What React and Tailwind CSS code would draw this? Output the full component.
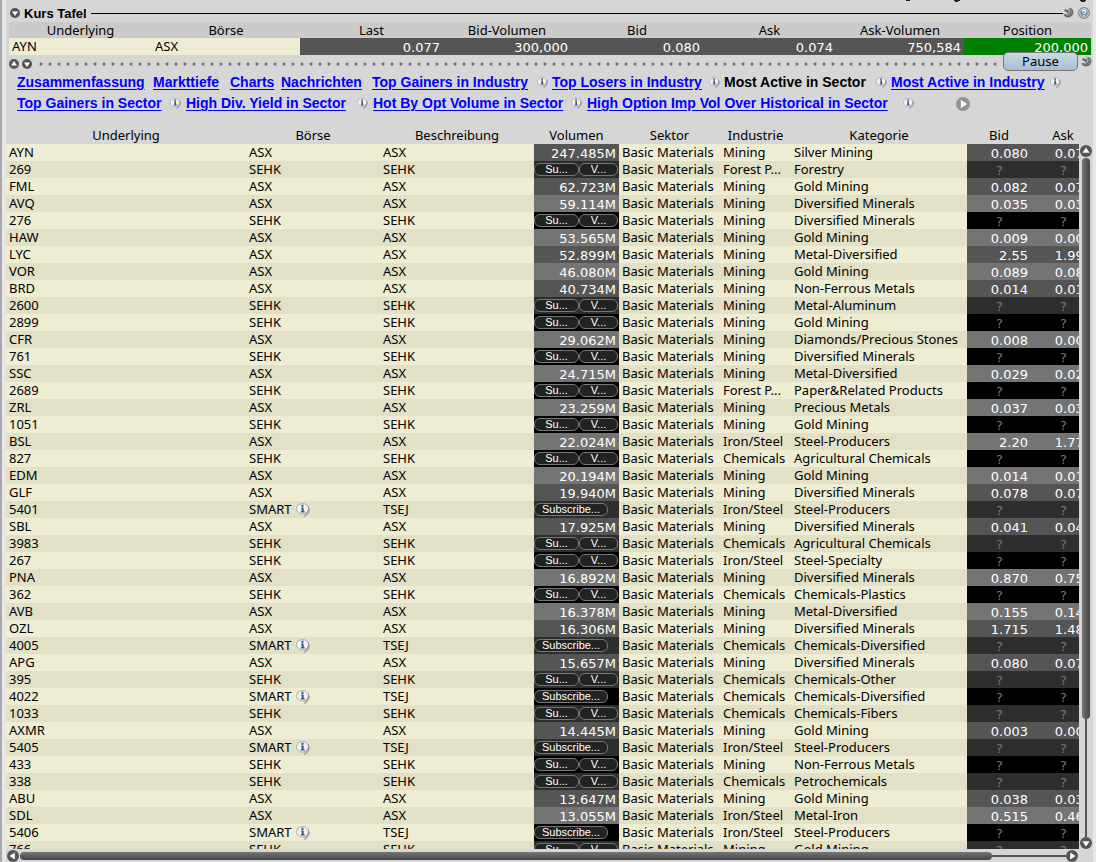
import React from "react";

const M = "Mining", C = "Chemicals", I = "Iron/Steel", F = "Forest P...";

// symbol, exchange, volume, industry, category, bid, ask
const rows = [
  ["AYN", "ASX", "247.485M", M, "Silver Mining", "0.080", "0.074"],
  ["269", "SEHK", null, F, "Forestry"],
  ["FML", "ASX", "62.723M", M, "Gold Mining", "0.082", "0.079"],
  ["AVQ", "ASX", "59.114M", M, "Diversified Minerals", "0.035", "0.034"],
  ["276", "SEHK", null, M, "Diversified Minerals"],
  ["HAW", "ASX", "53.565M", M, "Gold Mining", "0.009", "0.008"],
  ["LYC", "ASX", "52.899M", M, "Metal-Diversified", "2.55", "1.995"],
  ["VOR", "ASX", "46.080M", M, "Gold Mining", "0.089", "0.088"],
  ["BRD", "ASX", "40.734M", M, "Non-Ferrous Metals", "0.014", "0.013"],
  ["2600", "SEHK", null, M, "Metal-Aluminum"],
  ["2899", "SEHK", null, M, "Gold Mining"],
  ["CFR", "ASX", "29.062M", M, "Diamonds/Precious Stones", "0.008", "0.007"],
  ["761", "SEHK", null, M, "Diversified Minerals"],
  ["SSC", "ASX", "24.715M", M, "Metal-Diversified", "0.029", "0.028"],
  ["2689", "SEHK", null, F, "Paper&Related Products"],
  ["ZRL", "ASX", "23.259M", M, "Precious Metals", "0.037", "0.036"],
  ["1051", "SEHK", null, M, "Gold Mining"],
  ["BSL", "ASX", "22.024M", I, "Steel-Producers", "2.20", "1.770"],
  ["827", "SEHK", null, C, "Agricultural Chemicals"],
  ["EDM", "ASX", "20.194M", M, "Gold Mining", "0.014", "0.013"],
  ["GLF", "ASX", "19.940M", M, "Diversified Minerals", "0.078", "0.077"],
  ["5401", "SMART", null, I, "Steel-Producers"],
  ["SBL", "ASX", "17.925M", M, "Diversified Minerals", "0.041", "0.040"],
  ["3983", "SEHK", null, C, "Agricultural Chemicals"],
  ["267", "SEHK", null, I, "Steel-Specialty"],
  ["PNA", "ASX", "16.892M", M, "Diversified Minerals", "0.870", "0.750"],
  ["362", "SEHK", null, C, "Chemicals-Plastics"],
  ["AVB", "ASX", "16.378M", M, "Metal-Diversified", "0.155", "0.140"],
  ["OZL", "ASX", "16.306M", M, "Diversified Minerals", "1.715", "1.480"],
  ["4005", "SMART", null, C, "Chemicals-Diversified"],
  ["APG", "ASX", "15.657M", M, "Diversified Minerals", "0.080", "0.079"],
  ["395", "SEHK", null, C, "Chemicals-Other"],
  ["4022", "SMART", null, C, "Chemicals-Diversified"],
  ["1033", "SEHK", null, C, "Chemicals-Fibers"],
  ["AXMR", "ASX", "14.445M", M, "Gold Mining", "0.003", "0.002"],
  ["5405", "SMART", null, I, "Steel-Producers"],
  ["433", "SEHK", null, M, "Non-Ferrous Metals"],
  ["338", "SEHK", null, C, "Petrochemicals"],
  ["ABU", "ASX", "13.647M", M, "Gold Mining", "0.038", "0.037"],
  ["SDL", "ASX", "13.055M", I, "Metal-Iron", "0.515", "0.460"],
  ["5406", "SMART", null, I, "Steel-Producers"],
  ["766", "SEHK", null, M, "Gold Mining"],
];

const linkRows = [
  {
    cols: "grid-cols-[136px_77px_51px_91px_180px_172px_167px_174px]",
    links: [
      ["Zusammenfassung"], ["Markttiefe"], ["Charts"], ["Nachrichten"],
      ["Top Gainers in Industry", true], ["Top Losers in Industry", true],
      ["Most Active in Sector", true, true], ["Most Active in Industry", true],
    ],
  },
  {
    cols: "grid-cols-[169px_187px_214px_332px_51px]",
    links: [
      ["Top Gainers in Sector", true], ["High Div. Yield in Sector", true],
      ["Hot By Opt Volume in Sector", true],
      ["High Option Imp Vol Over Historical in Sector", true],
    ],
  },
];

const turns = { up: "", down: "rotate-180", left: "-rotate-90", right: "rotate-90" };

function ArrowButton({ dir, label, size = "size-[10px]", fill = "#555" }) {
  return (
    <button type="button" aria-label={label} className="block shrink-0">
      <svg viewBox="0 0 12 12" className={`block ${size} ${turns[dir]}`} aria-hidden="true">
        <circle cx="6" cy="6" r="6" fill={fill} />
        <path d="M6 2.500 9.600 7.800H2.400Z" fill="#fff" />
      </svg>
    </button>
  );
}

function Info({ size }) {
  return (
    <svg viewBox="0 0 14 14" className={`block shrink-0 ${size}`} aria-hidden="true">
      <path d="M9 10.500c.4 1 .2 2-.8 3 2.600-.4 4.800-3.500 5.200-7.500" fill="#c4c4c8" stroke="#8d8d90" strokeWidth=".7" />
      <ellipse cx="6.500" cy="5.800" rx="6" ry="5.300" fill="#eef0f6" stroke="#a4a6ac" strokeWidth=".9" />
      <path d="M12.200 3.500c1 2.500.5 5-2.400 6.800" fill="none" stroke="#85858a" strokeWidth="1" />
      <path d="M5.200 4.600h2.400v3.700h1v1.200H4.800V8.300h.9V5.800h-.5ZM5.500 1.800h2v2h-2Z" fill="#34506f" />
    </svg>
  );
}

function Wrench() {
  return (
    <svg viewBox="0 0 12 12" className="block size-[11px]" aria-hidden="true">
      <path d="M6 .8c3.500-.6 5.500 2 5.400 5C11.200 9.500 8 11.800 4.800 11.300 2.500 11 1 9.500.6 7.600l2.600.4 2-1.400L1 3.800 2.600 2.200l3.600 1.900Z" fill="#5e636b" />
      <path d="M6.800 1.200 7.600 5 4 9.300" stroke="#a9afb8" strokeWidth="1.400" fill="none" />
      <path d="M9.600 3.200c.6 2.600-.4 5-3 6.200" stroke="#8f959e" strokeWidth="1" fill="none" />
    </svg>
  );
}

function Help() {
  return (
    <svg viewBox="0 0 12 12" className="block size-[12px]" aria-hidden="true">
      <circle cx="6" cy="6" r="5.500" fill="#6f8297" stroke="#8c8c8c" />
      <circle cx="6" cy="6" r="4.400" fill="#8497ab" stroke="#d5dfe9" strokeWidth=".8" />
      <path d="M4.300 4.800c0-2.200 3.400-2.200 3.400-.2C7.700 5.800 6 5.800 6 7.100" fill="none" stroke="#fff" strokeWidth="1.200" />
      <circle cx="6" cy="8.700" r=".75" fill="#fff" />
    </svg>
  );
}

const pill =
  "h-[13px] rounded-[6px] border border-[#777] bg-[#222] text-center font-['Liberation_Sans',sans-serif] text-[11px] leading-[11px] text-white";

function Subscribe({ wide }) {
  if (wide) return <button type="button" className={`${pill} block w-[74px]`}>Subscribe...</button>;
  return (
    <div className="flex">
      <button type="button" className={`${pill} w-[45px]`}>Su...</button>
      <button type="button" className={`${pill} w-[39px]`}>V...</button>
    </div>
  );
}

const num = "p-0 text-right font-['DejaVu_Sans',sans-serif] text-white";
const numText = "pt-[2px] leading-[15px]";

function Quote({ value, bg }) {
  return (
    <td className={`${num} ${bg}`}>
      <div className={`${numText} ${value ? "pr-[3px]" : "pr-[28px] text-[#777]"}`}>{value || "?"}</div>
    </td>
  );
}

function Row({ row, odd }) {
  const [symbol, exchange, volume, industry, category, bid, ask] = row;
  const smart = exchange === "SMART";
  const bg = volume ? (odd ? "bg-[#747474]" : "bg-[#555]") : odd ? "bg-[#2e2e2e]" : "bg-black";
  return (
    <tr className={`h-[17px] ${odd ? "bg-[#e2e0c6]" : "bg-[#eeecd2]"}`}>
      <td className="p-0 pl-[3px]">{symbol}</td>
      <td className="p-0 pl-[3px]">
        <div className="flex items-center gap-[4px]">{exchange}{smart && <Info size="size-[14px]" />}</div>
      </td>
      <td className="p-0 pl-[3px]">{smart ? "TSEJ" : exchange}</td>
      <td className={`${num} ${bg}`}>
        {volume ? <div className={`${numText} pr-[3px]`}>{volume}</div> : <Subscribe wide={smart} />}
      </td>
      <td className="p-0 pl-[3px]">Basic Materials</td>
      <td className="p-0 pl-[3px]">{industry}</td>
      <td className="p-0 pl-[3px]">{category}</td>
      <Quote value={bid} bg={bg} />
      <Quote value={ask} bg={bg} />
    </tr>
  );
}

export default function App() {
  return (
    <div className="relative flex h-screen flex-col overflow-hidden border-r-[3px] border-l-2 border-r-[#e8e8e8] border-l-[#a9a9ad] bg-[#d6d6d6] font-['Noto_Sans',sans-serif] text-[13px] leading-[17px] text-black">
      <svg className="absolute top-0 right-[3px] h-[2px] w-[190px]" viewBox="0 0 190 2" aria-hidden="true">
        <path d="M6 0h4v1H6ZM54 0h6v1h-6ZM180 0h6v1h-6ZM55 1h3v1h-3ZM181 1h4v1h-4Z" fill="#222" />
      </svg>
      <div className="flex min-h-0 flex-1 flex-col border-l-4 border-[#e6e6e6]">
        <header className="flex h-[22px] shrink-0 items-end gap-[4px] pr-[3px] pl-1">
          <ArrowButton dir="down" label="Kurs Tafel" size="mb-1 size-[10px]" />
          <h1 className="font-['Liberation_Sans',sans-serif] text-[13px] leading-[17px] font-bold">Kurs Tafel</h1>
          <div className="mb-2 h-px flex-1 bg-black" />
          <button type="button" aria-label="Einstellungen" className="mb-1 -ml-1"><Wrench /></button>
          <button type="button" aria-label="Hilfe" className="mb-[3px]"><Help /></button>
        </header>

        <table className="mr-[2px] ml-[3px] shrink-0 table-fixed border-collapse">
          <colgroup>
            <col className="w-[143px]" /><col className="w-[148px]" /><col className="w-[143px]" />
            <col className="w-[128px]" /><col className="w-[132px]" /><col className="w-[133px]" />
            <col className="w-[128px]" /><col className="w-[127px]" />
          </colgroup>
          <thead>
            <tr className="h-4 bg-[#cbcbcb] leading-4">
              {["Underlying", "Börse", "Last", "Bid-Volumen", "Bid", "Ask", "Ask-Volumen", "Position"].map((h) => (
                <th key={h} scope="col" className="p-0 font-normal">{h}</th>
              ))}
            </tr>
          </thead>
          <tbody>
            <tr className="h-[17px] bg-[#eeecd2]">
              <td className="p-0 pl-[3px]">AYN</td>
              <td className="p-0 pl-[3px]">ASX</td>
              {["0.077", "300,000", "0.080", "0.074", "750,584"].map((v) => (
                <td key={v} className={`${num} bg-[#555]`}><div className={`${numText} pr-[3px]`}>{v}</div></td>
              ))}
              <td className={`${num} bg-[#008000]`}><div className={`${numText} pr-[3px]`}>200,000</div></td>
            </tr>
          </tbody>
        </table>

        <div className="flex h-[17px] shrink-0 items-center gap-[3px] pr-px pl-[3px]">
          <ArrowButton dir="up" label="Nach oben" />
          <ArrowButton dir="down" label="Nach unten" />
          <svg className="ml-1 h-[4px] flex-1" aria-hidden="true">
            <line x1="2" y1="2" x2="100%" y2="2" stroke="#6a6a6a" strokeWidth="3" strokeLinecap="round" strokeDasharray="0 9" />
          </svg>
          <button type="button" className="relative -mt-1 -ml-1 h-[19px] w-[75px] rounded-[5px] border border-[#777] bg-linear-to-b from-[#c9d9e8] to-[#a5bdd3] leading-[17px]">Pause</button>
          <button type="button" aria-label="Einstellungen" className="-mt-1"><Wrench /></button>
        </div>

        <nav className="shrink-0 pl-[11px] font-['Liberation_Sans',sans-serif] text-[14px] leading-[21px] font-bold">
          {linkRows.map(({ cols, links }, i) => (
            <div key={cols} className={`grid h-[21px] items-center ${cols}`}>
              {links.map(([label, info, current]) => (
                <span key={label} className={`flex items-center justify-between whitespace-nowrap ${i ? "pr-[5px]" : "pr-[4px]"}`}>
                  <a href="#" className={current ? "text-black" : "text-[#0000ff] underline underline-offset-2"}>{label}</a>
                  {info && <Info size="size-[11px]" />}
                </span>
              ))}
              {i === 1 && <span className="justify-self-end"><ArrowButton dir="right" label="Weiter" size="size-[14px]" fill="#929292" /></span>}
            </div>
          ))}
        </nav>

        <div className="flex min-h-0 flex-1 pt-[12px]">
          <div className="min-w-0 flex-1 overflow-hidden">
            <table className="w-[1089px] table-fixed border-collapse whitespace-nowrap">
              <colgroup>
                <col className="w-[240px]" /><col className="w-[134px]" /><col className="w-[154px]" />
                <col className="w-[85px]" /><col className="w-[101px]" /><col className="w-[71px]" />
                <col className="w-[176px]" /><col className="w-[64px]" /><col className="w-[64px]" />
              </colgroup>
              <thead>
                <tr className="h-[18px]">
                  {["Underlying", "Börse", "Beschreibung", "Volumen", "Sektor", "Industrie", "Kategorie", "Bid", "Ask"].map((h) => (
                    <th key={h} scope="col" className="p-0 font-normal">{h}</th>
                  ))}
                </tr>
              </thead>
              <tbody>
                {rows.map((row, i) => <Row key={row[0]} row={row} odd={i % 2 === 1} />)}
              </tbody>
            </table>
          </div>
          <div className="flex w-[14px] shrink-0 flex-col items-center pt-[19px]">
            <ArrowButton dir="up" label="Zeile nach oben" size="size-[12px]" />
            <div className="mt-px h-[561px] w-[8px] shrink-0 rounded-full bg-linear-to-r from-[#777] to-[#444]" />
            <div className="w-[2px] flex-1 bg-[#555]" />
            <ArrowButton dir="down" label="Zeile nach unten" size="size-[12px]" />
          </div>
        </div>
        <div className="flex h-[13px] shrink-0 items-center pr-[15px] pl-px">
          <ArrowButton dir="left" label="Nach links" size="size-[12px]" />
          <div className="ml-px h-[8px] w-[972px] shrink-0 rounded-full bg-linear-to-b from-[#777] to-[#444]" />
          <div className="h-[2px] flex-1 bg-[#555]" />
          <ArrowButton dir="right" label="Nach rechts" size="size-[12px]" />
        </div>
      </div>
    </div>
  );
}
